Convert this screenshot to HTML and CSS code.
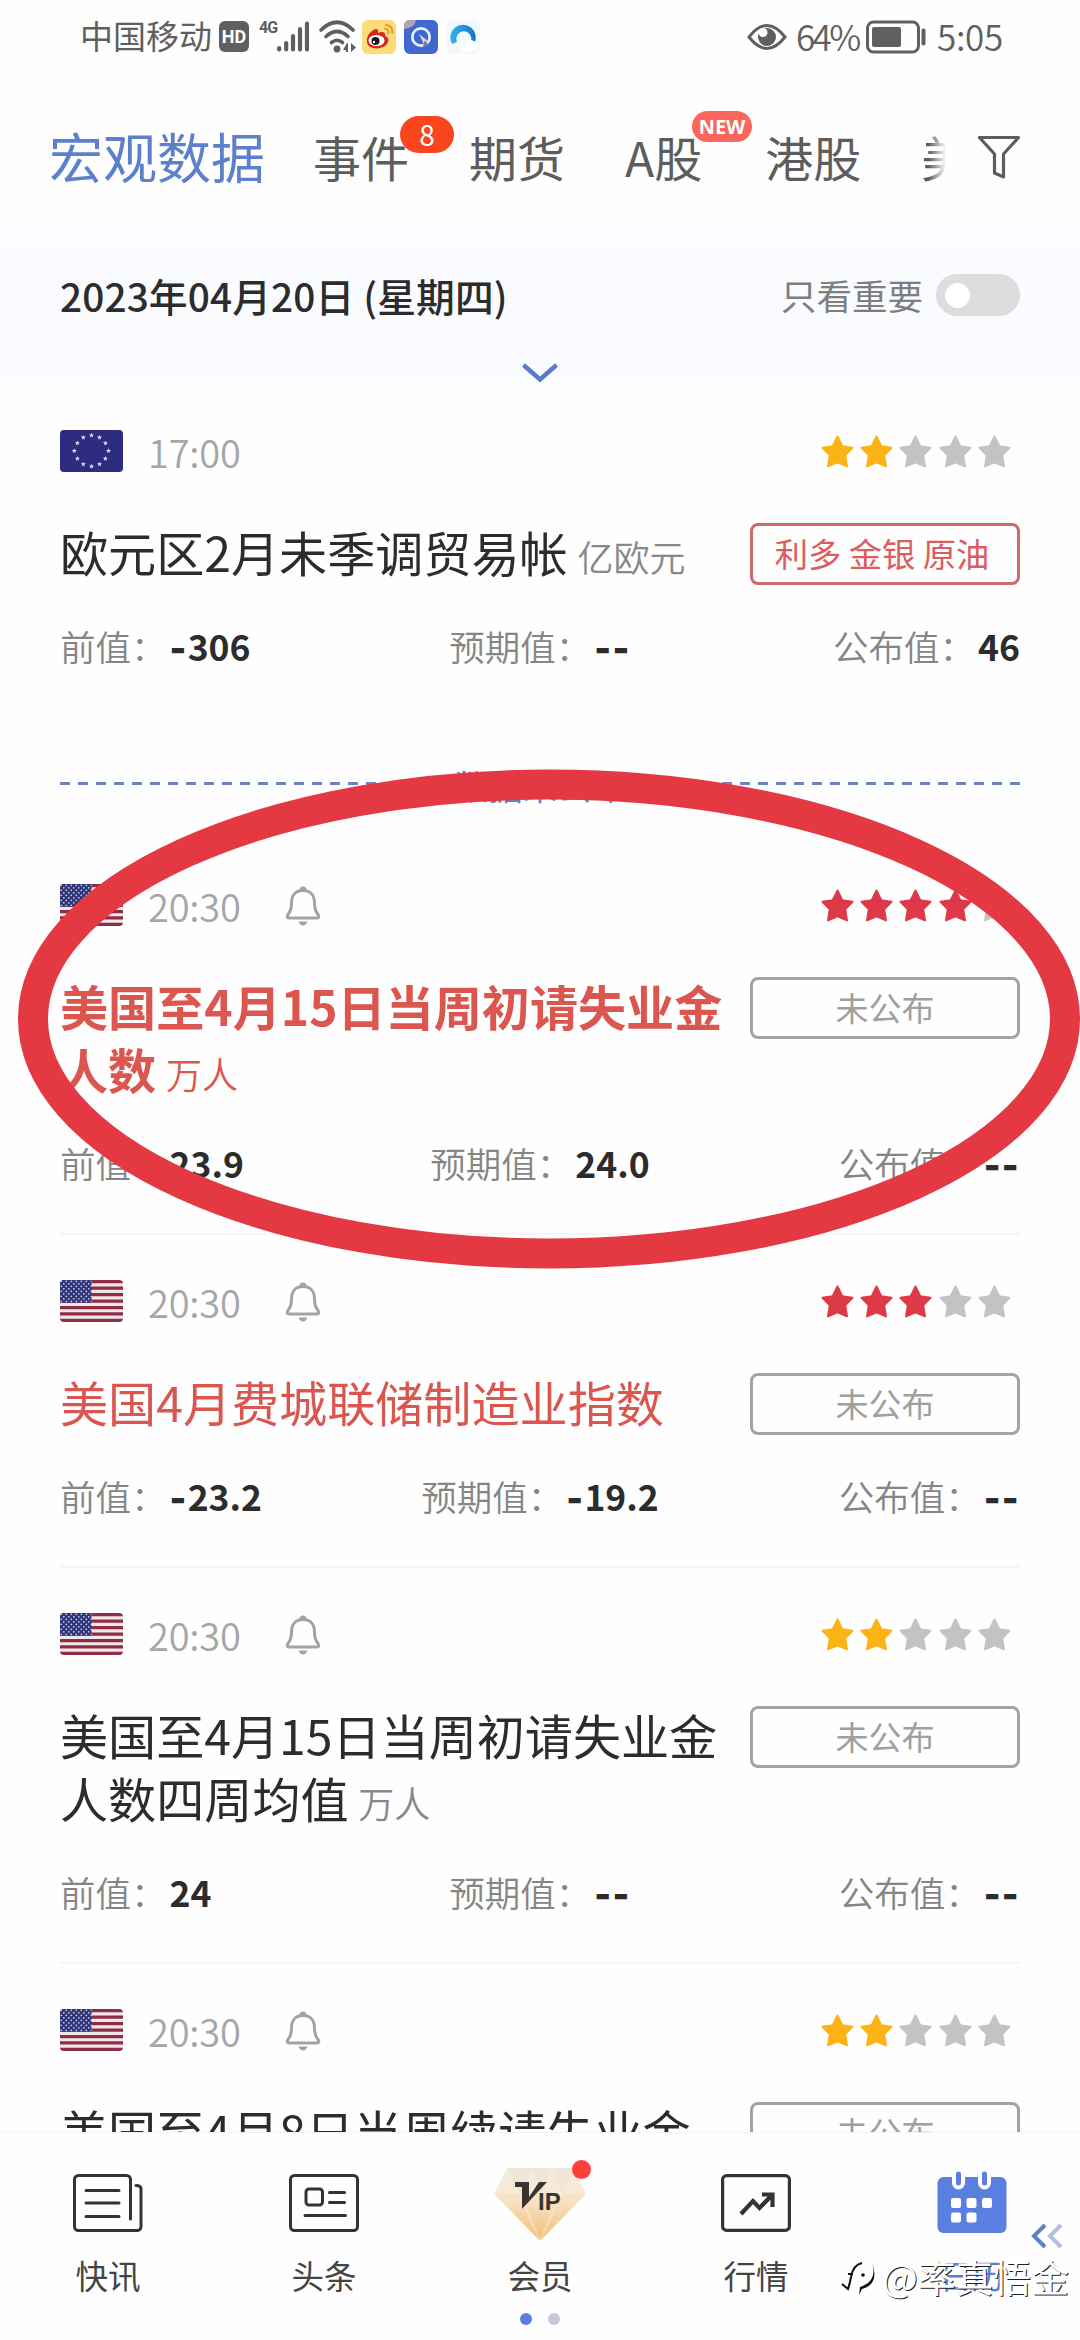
FILE: index.html
```html
<!DOCTYPE html>
<html lang="zh-CN">
<head>
<meta charset="utf-8">
<title>财经日历</title>
<link rel="stylesheet" href="styles.css">
</head>
<body>
<svg class="defs" width="0" height="0" aria-hidden="true">
  <defs>
    <symbol id="star" viewBox="0 0 33 33"><path d="M16.500 1.500L21.300 11.200L31.500 12.700L24.200 20.200L26.000 31.300L16.500 27.400L7.000 31.300L8.800 20.200L1.500 12.700L11.700 11.200Z" fill="currentColor" stroke="currentColor" stroke-width="2" stroke-linejoin="round"/></symbol>
    <symbol id="bell" viewBox="0 0 36 40"><path d="M18 4.500C10 4.500 6.500 10 6.500 17C6.500 23 5.500 25.500 3 28.500C1.500 31 2.300 32 4 32H32C33.700 32 34.500 31 33 28.500C30.500 25.500 29.500 23 29.500 17C29.500 10 26 4.500 18 4.500Z" fill="none" stroke="currentColor" stroke-width="3"/><path d="M16 4.500a2 2.500 0 0 1 4 0" fill="none" stroke="currentColor" stroke-width="3"/><path d="M13.500 35.500h9q-1.500 4-4.500 4t-4.500-4z" fill="currentColor"/></symbol>
    <pattern id="cantonStars" width="5" height="5" patternUnits="userSpaceOnUse"><rect width="5" height="5" fill="#2f3478"/><circle cx="1.300" cy="1.300" r=".9" fill="#c9cbe6"/><circle cx="3.800" cy="3.800" r=".9" fill="#c9cbe6"/></pattern>
    <symbol id="us" viewBox="0 0 63 42"><rect width="63" height="42" fill="#f3e6ea"/><path d="M0 1.600h63M0 8.100h63M0 14.600h63M0 21h63M0 27.500h63M0 33.900h63M0 40.400h63" stroke="#8c2f45" stroke-width="3.250"/><rect width="31.500" height="22.600" fill="url(#cantonStars)"/></symbol>
    <symbol id="es" viewBox="-10 -10 20 20"><path d="M0-9L2.300-3L9-3L3.700 1.200L5.700 8L0 4L-5.700 8L-3.700 1.200L-9-3L-2.300-3Z" fill="#e3e4f0"/></symbol>
    <linearGradient id="gold" x1="0" y1="0" x2="0" y2="1"><stop offset="0" stop-color="#f1e6dc"/><stop offset=".45" stop-color="#f7e2c3"/><stop offset="1" stop-color="#f3bd72"/></linearGradient>
    <linearGradient id="qq" x1="0" y1="0" x2="1" y2="0"><stop offset="0" stop-color="#35b4ea"/><stop offset="1" stop-color="#1672c9"/></linearGradient>
  </defs>
</svg>

<div class="phone">
  <header class="status">
    <div class="status-left">
      <span class="carrier">中国移动</span>
      <span class="hd">HD</span>
      <span class="net">4G</span>
      <svg class="signal" width="32" height="31" viewBox="0 0 32 31"><path d="M2.200 27v1.500M9.200 22v6.500M16 15v13.500M23 8v20.500M30 2.500v26" stroke="#5f5f5f" stroke-width="4.200" stroke-linecap="round"/></svg>
      <svg class="wifi" width="38" height="34" viewBox="0 0 38 34"><g fill="none" stroke="#5f5f5f" stroke-width="3.600" stroke-linecap="round"><path d="M2 10Q18 -5.500 34 10"/><path d="M7 16.500Q18 6.500 29 16.500"/><path d="M12.500 22.500Q18 18 23.500 22.500"/></g><circle cx="18" cy="29" r="3.400" fill="#5f5f5f"/><path d="M29 23v9h-2v-2h-3l4-7zM32 23v9l5-4.500z" fill="#5f5f5f"/></svg>
      <svg class="app" width="34" height="34" viewBox="0 0 34 34"><rect width="34" height="34" rx="6" fill="#fbdc78"/><path d="M5 22C4 15 10 10 14 9C17 9 16 12 16 13C20 11 24 12 23 16C28 18 27 22 24 25C19 30 6 30 5 22Z" fill="#d7251f"/><ellipse cx="14.500" cy="20.500" rx="8" ry="5.500" fill="#fff"/><circle cx="13.500" cy="21" r="4" fill="#151515"/><circle cx="12" cy="22" r="1.200" fill="#fff"/><path d="M22 8.500q5 0 4.500 5.500M23 4.500q8 1 7.500 9" fill="none" stroke="#eb9b2f" stroke-width="2.200"/></svg>
      <svg class="app" width="34" height="34" viewBox="0 0 34 34"><rect width="34" height="34" rx="6" fill="#4069cf"/><path d="M0 9V6q0-6 6-6h6q-1 8-12 9z" fill="#b3a3b2"/><circle cx="17" cy="17" r="8.700" fill="none" stroke="#e8f2ff" stroke-width="2.700"/><path d="M15 14l10 8-4 4z" fill="#d8dce5"/><path d="M21 20l4 6h-6z" fill="#807b89"/></svg>
      <svg class="app" width="34" height="34" viewBox="0 0 34 34"><rect width="34" height="34" rx="6" fill="#f3f8fc"/><path d="M6 24a12.800 12.800 0 1 1 22 0l-6 1a7.500 7.500 0 1 0-11 -3z" fill="url(#qq)"/><path d="M15 31q-1-6 5-7q2-6 8-3q4 1 4 6q0 4-4 4z" fill="#fff"/></svg>
    </div>
    <div class="status-right">
      <svg width="40" height="28" viewBox="0 0 40 28"><path d="M2 14Q20-9 38 14Q20 37 2 14Z" fill="none" stroke="#5f5f5f" stroke-width="3"/><circle cx="20" cy="14" r="9" fill="#5f5f5f"/><circle cx="16" cy="9.500" r="4.500" fill="#fff"/></svg>
      <span class="pct">64%</span>
      <svg class="battery" width="60" height="34" viewBox="0 0 60 34"><rect x="1.500" y="2" width="51" height="30" rx="6" fill="none" stroke="#5f5f5f" stroke-width="3"/><rect x="6" y="7" width="29" height="20" rx="2" fill="#5f5f5f"/><path d="M57.500 10.500v13" stroke="#5f5f5f" stroke-width="4" stroke-linecap="round"/></svg>
      <span class="clock">5:05</span>
    </div>
  </header>

  <nav class="tabs">
    <span class="tab active">宏观数据</span>
    <span class="tab">事件<i class="count">8</i></span>
    <span class="tab">期货</span>
    <span class="tab stocks">A股<i class="new">NEW</i></span>
    <span class="tab">港股</span>
    <span class="tab fading">美</span>
    <svg class="filter" width="44" height="46" viewBox="0 0 44 46"><path d="M2.500 3.500H41.500L26.500 20V43L17.500 39V20Z" fill="none" stroke="#5d5d5d" stroke-width="3.200" stroke-linejoin="round"/></svg>
  </nav>

  <section class="datebar">
    <div class="daterow">
      <strong>2023年04月20日 (星期四)</strong>
      <span class="only">只看重要</span>
      <span class="toggle"></span>
    </div>
    <svg class="chev" width="38" height="22" viewBox="0 0 38 22"><path d="M2.500 3L19 17.500L35.500 3" fill="none" stroke="#597cc9" stroke-width="4.400"/></svg>
  </section>

  <main class="list">
    <article class="item first">
      <div class="meta">
        <svg class="flag" viewBox="0 0 63 42"><rect width="63" height="42" fill="#2d2c7f"/>
          <g><use href="#es" x="28.700" y="2.500" width="5.600" height="5.600"/><use href="#es" x="36.700" y="4.600" width="5.600" height="5.600"/><use href="#es" x="42.600" y="10.300" width="5.600" height="5.600"/><use href="#es" x="45.700" y="18" width="5.600" height="5.600"/><use href="#es" x="42.600" y="25.800" width="5.600" height="5.600"/><use href="#es" x="36.700" y="31.400" width="5.600" height="5.600"/><use href="#es" x="28.700" y="33.500" width="5.600" height="5.600"/><use href="#es" x="20.500" y="31.400" width="5.600" height="5.600"/><use href="#es" x="14.600" y="25.800" width="5.600" height="5.600"/><use href="#es" x="11.500" y="18" width="5.600" height="5.600"/><use href="#es" x="14.600" y="10.300" width="5.600" height="5.600"/><use href="#es" x="20.500" y="4.600" width="5.600" height="5.600"/></g></svg>
        <time>17:00</time>
        <div class="stars"><svg class="gold"><use href="#star"/></svg><svg class="gold"><use href="#star"/></svg><svg><use href="#star"/></svg><svg><use href="#star"/></svg><svg><use href="#star"/></svg></div>
      </div>
      <div class="head"><h2>欧元区2月未季调贸易帐 <small>亿欧元</small></h2><span class="tag bull">利多 金银 原油</span></div>
      <dl class="vals"><div><dt>前值：</dt><dd><b>-</b>306</dd></div><div><dt>预期值：</dt><dd><b>--</b></dd></div><div><dt>公布值：</dt><dd>46</dd></div></dl>
    </article>

    <div class="split"><span>数据未公布</span></div>

    <article class="item hot">
      <div class="meta"><svg class="flag"><use href="#us"/></svg><time>20:30</time><svg class="bell"><use href="#bell"/></svg>
        <div class="stars"><svg class="red"><use href="#star"/></svg><svg class="red"><use href="#star"/></svg><svg class="red"><use href="#star"/></svg><svg class="red"><use href="#star"/></svg><svg><use href="#star"/></svg></div>
      </div>
      <div class="head"><h2>美国至4月15日当周初请失业金人数 <small>万人</small></h2><span class="tag">未公布</span></div>
      <dl class="vals"><div><dt>前值：</dt><dd>23.9</dd></div><div><dt>预期值：</dt><dd>24.0</dd></div><div><dt>公布值：</dt><dd><b>--</b></dd></div></dl>
      <svg class="ring" width="1064" height="502" viewBox="0 0 1064 502"><ellipse cx="532" cy="251" rx="516" ry="234.500" fill="none" stroke="#e43843" stroke-width="30"/></svg>
    </article>

    <article class="item warm">
      <div class="meta"><svg class="flag"><use href="#us"/></svg><time>20:30</time><svg class="bell"><use href="#bell"/></svg>
        <div class="stars"><svg class="red"><use href="#star"/></svg><svg class="red"><use href="#star"/></svg><svg class="red"><use href="#star"/></svg><svg><use href="#star"/></svg><svg><use href="#star"/></svg></div>
      </div>
      <div class="head"><h2>美国4月费城联储制造业指数</h2><span class="tag">未公布</span></div>
      <dl class="vals"><div><dt>前值：</dt><dd><b>-</b>23.2</dd></div><div><dt>预期值：</dt><dd><b>-</b>19.2</dd></div><div><dt>公布值：</dt><dd><b>--</b></dd></div></dl>
    </article>

    <article class="item">
      <div class="meta"><svg class="flag"><use href="#us"/></svg><time>20:30</time><svg class="bell"><use href="#bell"/></svg>
        <div class="stars"><svg class="gold"><use href="#star"/></svg><svg class="gold"><use href="#star"/></svg><svg><use href="#star"/></svg><svg><use href="#star"/></svg><svg><use href="#star"/></svg></div>
      </div>
      <div class="head"><h2>美国至4月15日当周初请失业金人数四周均值 <small>万人</small></h2><span class="tag">未公布</span></div>
      <dl class="vals"><div><dt>前值：</dt><dd>24</dd></div><div><dt>预期值：</dt><dd><b>--</b></dd></div><div><dt>公布值：</dt><dd><b>--</b></dd></div></dl>
    </article>

    <article class="item">
      <div class="meta"><svg class="flag"><use href="#us"/></svg><time>20:30</time><svg class="bell"><use href="#bell"/></svg>
        <div class="stars"><svg class="gold"><use href="#star"/></svg><svg class="gold"><use href="#star"/></svg><svg><use href="#star"/></svg><svg><use href="#star"/></svg><svg><use href="#star"/></svg></div>
      </div>
      <div class="head"><h2>美国至4月8日当周续请失业金</h2><span class="tag">未公布</span></div>
    </article>
  </main>

  <footer class="bottom">
    <a class="navitem"><svg width="70" height="58" viewBox="0 0 70 58"><g fill="none" stroke="#333" stroke-width="3" stroke-linecap="round"><path d="M57.500 45V5.500a4 4 0 0 0-4-4H5.500a4 4 0 0 0-4 4V52.500a4 4 0 0 0 4 4H64a4 4 0 0 0 4-4V15q0-3.500-5-3.500"/><path d="M13 16.500H46M13 29H46M13 42.500H46"/></g></svg><span>快讯</span></a>
    <a class="navitem"><svg width="70" height="58" viewBox="0 0 70 58"><g fill="none" stroke="#333" stroke-width="3" stroke-linecap="round"><rect x="1.500" y="1.500" width="67" height="55" rx="4"/><rect x="17" y="15" width="16.500" height="16" rx="3"/><path d="M40.500 18.500H55.500M40.500 28.500H55.500M16 41.500H56.500"/></g></svg><span>头条</span></a>
    <a class="navitem vip"><svg width="94" height="76" viewBox="0 0 94 76"><path d="M14 2H80L93 28L47 75L1 28Z" fill="url(#gold)"/><path d="M14 2L27 27L40 2L47 27L60 2L68 27L80 2L93 28H1Z" fill="#fff" opacity=".22"/><path d="M27 28L47 75L68 28" fill="none" stroke="#fff" stroke-opacity=".3" stroke-width="2"/><path d="M22 16H36V31L46 16H54L29 43V21H22Z" fill="#3a3533"/><text x="45" y="44" class="ip">IP</text></svg><i class="dot"></i><span>会员</span></a>
    <a class="navitem"><svg width="70" height="58" viewBox="0 0 70 58"><g fill="none" stroke="#333" stroke-width="3.200"><rect x="1.600" y="1.600" width="66.800" height="54.800" rx="4"/><path d="M20 40L32 27L38.500 34L51 21M41 20.500H51.500V33" stroke-width="4.200"/></g></svg><span>行情</span></a>
    <a class="navitem current"><svg width="70" height="62" viewBox="0 0 70 62"><rect x=".5" y="6" width="69" height="56" rx="6" fill="#5a7fe0"/><path d="M21.500 3V12M47.500 3V12" stroke="#fff" stroke-width="13" stroke-linecap="round"/><path d="M21.500 3V12M47.500 3V12" stroke="#5a7fe0" stroke-width="5" stroke-linecap="round"/><g fill="#fff"><rect x="14" y="27" width="10" height="10" rx="2"/><rect x="29.500" y="27" width="10" height="10" rx="2"/><rect x="45" y="27" width="10" height="10" rx="2"/><rect x="14" y="41.500" width="10" height="10" rx="2"/><rect x="29.500" y="41.500" width="10" height="10" rx="2"/></g></svg><span>日历</span></a>
    <div class="pager"><i></i><i></i></div>
    <svg class="back" width="32" height="26" viewBox="0 0 32 26"><path d="M14 2L3 13L14 24" fill="none" stroke="#5c7fc9" stroke-width="4"/><path d="M30 2L19 13L30 24" fill="none" stroke="#b3bfe2" stroke-width="4"/></svg>
    <div class="mark"><svg width="40" height="44" viewBox="0 0 40 44"><path d="M3 30l6 5q2-6 3-12q2-12 11-14" fill="none" stroke="#111" stroke-width="2"/><path d="M9 20h5" stroke="#111" stroke-width="2"/><circle cx="24" cy="21" r="1.800" fill="#111"/><path d="M33 8q8 22-10 27l-3 6l1-8q18-6 12-25z" fill="#111"/></svg><span>@率真悟金</span></div>
  </footer>
</div>
</body>
</html>
```
FILE: styles.css
```css
* { box-sizing: border-box; }
body, h2, dl, dd { margin: 0; }
body {
  background: #fefefe;
  color: #2c2c2c;
  font-family: "Noto Sans CJK SC", "Noto Sans", sans-serif;
}
svg { display: block; flex: none; }
i { font-style: normal; }
.defs { position: absolute; }
.phone {
  width: 1080px;
  height: 2340px;
  display: flex;
  flex-direction: column;
  overflow: hidden;
}

/* status bar */
.status {
  height: 73px;
  flex: none;
  display: flex;
  justify-content: space-between;
  padding: 0 77px 0 80px;
  color: #5f5f5f;
}
.status-left, .status-right { display: flex; align-items: center; }
.carrier { font-size: 33px; line-height: 40px; margin-top: -3px; }
.hd {
  width: 30px;
  height: 31px;
  margin-left: 7px;
  border-radius: 6px;
  background: #5f5f5f;
  color: #fff;
  font: bold 18px/31px "Roboto", sans-serif;
  text-align: center;
}
.net { width: 17px; margin: -18px 0 0 10px; font: bold 16px/20px "Roboto", sans-serif; letter-spacing: -1px; }
.signal { margin-left: 1px; }
.wifi { margin: 0 5px 0 10px; }
.app { margin-right: 8px; }
.status-right { font-size: 35px; line-height: 40px; font-weight: 350; }
.pct { width: 63px; margin: -1px 7px 0 9px; letter-spacing: -2.600px; white-space: nowrap; }
.battery { margin-right: 11px; }
.clock { letter-spacing: -.3px; margin-top: -1px; width: 66px; white-space: nowrap; }

/* category tabs */
.tabs {
  height: 151px;
  flex: none;
  display: flex;
  align-items: center;
  padding: 12px 0 0 49px;
  gap: 60px;
  font-size: 48px;
  line-height: 60px;
  color: #5d5d5d;
}
.tab { position: relative; margin-top: 3px; white-space: nowrap; }
.active { font-size: 54px; color: #5d80cc; margin-right: -12px; }
.stocks { margin-right: 3px; }
.fading {
  width: 25px;
  overflow: hidden;
  -webkit-mask-image: linear-gradient(90deg, #000 30%, transparent);
  mask-image: linear-gradient(90deg, #000 30%, transparent);
}
.filter { margin: 5px 0 0 -29px; }
.count, .new { position: absolute; color: #fff; text-align: center; }
.count { left: 87px; top: -10px; width: 54px; height: 37px; border-radius: 19px; background: #fb451f; font-size: 28px; line-height: 36px; }
.new { left: 67px; top: -15px; width: 60px; height: 31px; border-radius: 16px; background: #fa6659; font: bold 20px/31px "Open Sans", sans-serif; }

/* date header */
.datebar {
  height: 164px;
  flex: none;
  padding: 46px 60px 0;
  background: linear-gradient(#fcfdff, #fafbff 20%, #fafbff 90%, #fdfeff);
}
.daterow { display: flex; align-items: center; height: 50px; }
.daterow strong { font-size: 38.800px; line-height: 50px; font-weight: 500; margin-top: -1px; letter-spacing: .1px; }
.only { margin: -1px 13px 0 auto; font-size: 35.500px; line-height: 50px; color: #7d7e82; }
.toggle { width: 84px; height: 42px; border-radius: 21px; background: #dcddde; display: flex; align-items: center; padding-left: 9px; }
.toggle::before { content: ""; width: 25px; height: 25px; border-radius: 50%; background: #fff; }
.chev { margin: 42px auto 0; }

/* calendar entries */
.list { flex: 1; min-height: 0; overflow: hidden; }
.item { position: relative; margin: 0 60px; padding: 45px 0 46px; border-bottom: 2px solid #f5f5f5; }
.first { padding-top: 42px; border: 0; }
.meta { display: flex; align-items: center; height: 42px; }
.flag { width: 63px; height: 42px; border-radius: 4px; }
.meta time { width: 92px; margin: 1px 0 0 25px; color: #a6a6a6; font-size: 38px; line-height: 42px; font-weight: 350; letter-spacing: -.2px; white-space: nowrap; }
.bell { width: 36px; height: 40px; margin: 1px 0 0 45px; color: #a3a3a3; }
.stars { display: flex; gap: 6.300px; margin: 0 9px 0 auto; }
.stars svg { width: 33px; height: 33px; color: #c3c3c3; }
.stars .gold { color: #fcb316; }
.stars .red { color: #de3948; }
.head { display: flex; align-items: flex-start; margin-top: 51px; }
.head h2 { flex: 1; margin-top: -3px; margin-bottom: 3px; padding-right: 10px; font-size: 48.100px; line-height: 63px; font-weight: 400; }
.head small { font-size: 36px; line-height: 0; color: #888; font-weight: 350; margin-left: -1px; }
.hot h2, .warm h2, .hot h2 small { color: #dc5650; }
.hot h2 { font-weight: 700; }
.tag {
  width: 270px;
  height: 62px;
  border: 3px solid #a3a3a3;
  border-radius: 8px;
  color: #a0a0a0;
  font-size: 33px;
  line-height: 54px;
  text-align: center;
}
.bull { border-color: #cc6a6e; color: #dc5c60; padding-right: 6px; font-size: 33.300px; }
.vals { display: grid; grid-template-columns: 1fr auto 1fr; margin-top: 40px; height: 44px; }
.vals div { display: flex; line-height: 44px; margin-top: -2px; white-space: nowrap; }
.vals div:last-child { justify-content: flex-end; }
.vals dt { font-size: 35.500px; color: #858585; font-weight: 350; margin-right: 3px; }
.vals dd { font-size: 35.500px; font-weight: 700; }
.vals b { font-family: "Inter", sans-serif; letter-spacing: 1.300px; line-height: 0; }
.split {
  display: flex;
  height: 123px;
  margin: 0 60px;
  padding: 47px 0 36px;
  align-items: center;
  color: #6580c4;
  font-size: 34.500px;
  line-height: 40px;
}
.split span { padding: 3px 12px 0; }
.split::before, .split::after {
  content: "";
  flex: 1;
  height: 3px;
  background: repeating-linear-gradient(90deg, #6c84c6 0 10px, transparent 10px 18px);
}
.split::after { background: repeating-linear-gradient(270deg, #6c84c6 0 10px, transparent 10px 18px); }
.ring { position: absolute; left: -43px; top: -71px; z-index: 2; }

/* bottom navigation */
.bottom {
  position: relative;
  height: 208px;
  flex: none;
  display: grid;
  grid-template-columns: repeat(5, 1fr);
  background: #fefefe;
  border-top: 1px solid #f3f3f3;
}
.navitem { position: relative; display: flex; flex-direction: column; align-items: center; padding-top: 41px; }
.navitem > span { margin-top: 21px; font-size: 32.500px; line-height: 44px; color: #444; }
.vip { padding-top: 33px; }
.vip > span { margin-top: 11px; }
.ip { font: bold 24px "Liberation Sans", sans-serif; fill: #3a3533; }
.dot { position: absolute; left: 140px; top: 27px; width: 19px; height: 19px; border-radius: 50%; background: #fb4038; }
.current { padding-top: 38px; }
.current > span { margin-top: 20px; color: #5a7fd4; }
.pager { position: absolute; left: 520px; top: 180px; display: flex; gap: 16px; }
.pager i { width: 12px; height: 12px; border-radius: 50%; background: #5b7ee0; }
.pager i + i { background: #c6c6d4; }
.back { position: absolute; left: 1031px; top: 90px; }
.mark { position: absolute; left: 839px; top: 121px; display: flex; align-items: center; color: #fff; font-size: 37.800px; line-height: 44px; text-shadow: 1px 1px 0 #222; white-space: nowrap; }
.mark span { margin-left: 3px; }
```
